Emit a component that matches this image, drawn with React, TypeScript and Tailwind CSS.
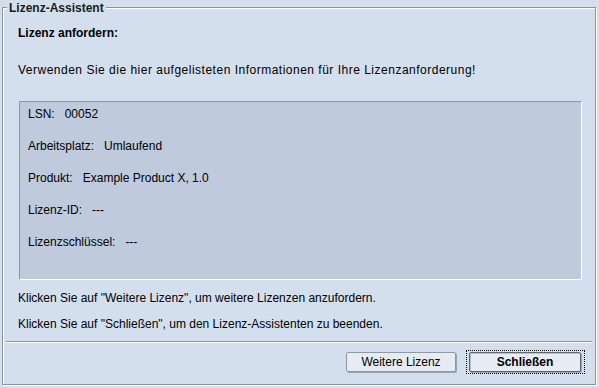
import React from 'react';

const rows = [
  { label: 'LSN:', value: '00052' },
  { label: 'Arbeitsplatz:', value: 'Umlaufend' },
  { label: 'Produkt:', value: 'Example Product X, 1.0' },
  { label: 'Lizenz-ID:', value: '---' },
  { label: 'Lizenzschlüssel:', value: '---' },
];

function App() {
  return (
    <div
      className="w-[599px] h-[388px] bg-[#d4dfee] pl-[2px] pt-[7px] pr-[3px] pb-[3px] text-[12px] leading-[14px] text-black"
      style={{ fontFamily: '"Liberation Sans", Arial, sans-serif' }}
    >
      {/* Titled etched border */}
      <div className="relative h-full border border-[#8a939f] shadow-[inset_1px_1px_0_#ffffff,1px_1px_0_#ffffff] flex flex-col">
        <div className="absolute left-[4px] top-[-7px] bg-[#d4dfee] px-[2px] font-bold text-[#1c1c1c]">
          Lizenz-Assistent
        </div>

        <div className="pl-[15px] pt-[18px] font-bold">Lizenz anfordern:</div>
        <div className="pl-[15px] mt-[23px] tracking-[0.5px]">
          Verwenden Sie die hier aufgelisteten Informationen für Ihre Lizenzanforderung!
        </div>

        {/* Info box */}
        <div className="ml-[16px] mr-[13px] mt-[24px] h-[179px] bg-[#bfcadc] border-t border-l border-[#8d96a2] border-b border-r border-b-white border-r-white pl-[8px] pt-[5px] flex flex-col gap-[18px]">
          {rows.map((r) => (
            <div key={r.label} className="flex">
              <span>{r.label}</span>
              <span className="ml-[10px]">{r.value}</span>
            </div>
          ))}
        </div>

        <div className="pl-[15px] mt-[11px]">
          Klicken Sie auf "Weitere Lizenz", um weitere Lizenzen anzufordern.
        </div>
        <div className="pl-[15px] mt-[12px]">
          Klicken Sie auf "Schließen", um den Lizenz-Assistenten zu beenden.
        </div>

        {/* Separator */}
        <div className="mx-[3px] mt-[10px] border-t border-[#8a939f] border-b border-b-white" />

        {/* Buttons */}
        <div className="flex justify-end items-center gap-[10px] mr-[10px] mt-[7px]">
          <button className="w-[110px] h-[20px] bg-[#e6ebf4] border border-[#8f99a6] rounded-[2px] shadow-[1px_1px_0_#9aa4b1] text-[12px] leading-[14px]">
            Weitere Lizenz
          </button>
          <div className="border border-dotted border-black pl-[2px] pr-[3px] py-[1px]">
            <button className="w-[112px] h-[20px] bg-[#e6ebf4] border border-[#5f6770] rounded-[2px] shadow-[inset_1px_1px_0_#b8c0cb,1px_1px_0_#9aa4b1] font-bold text-[12px] leading-[14px]">
              Schließen
            </button>
          </div>
        </div>
      </div>
    </div>
  );
}

export default App;
